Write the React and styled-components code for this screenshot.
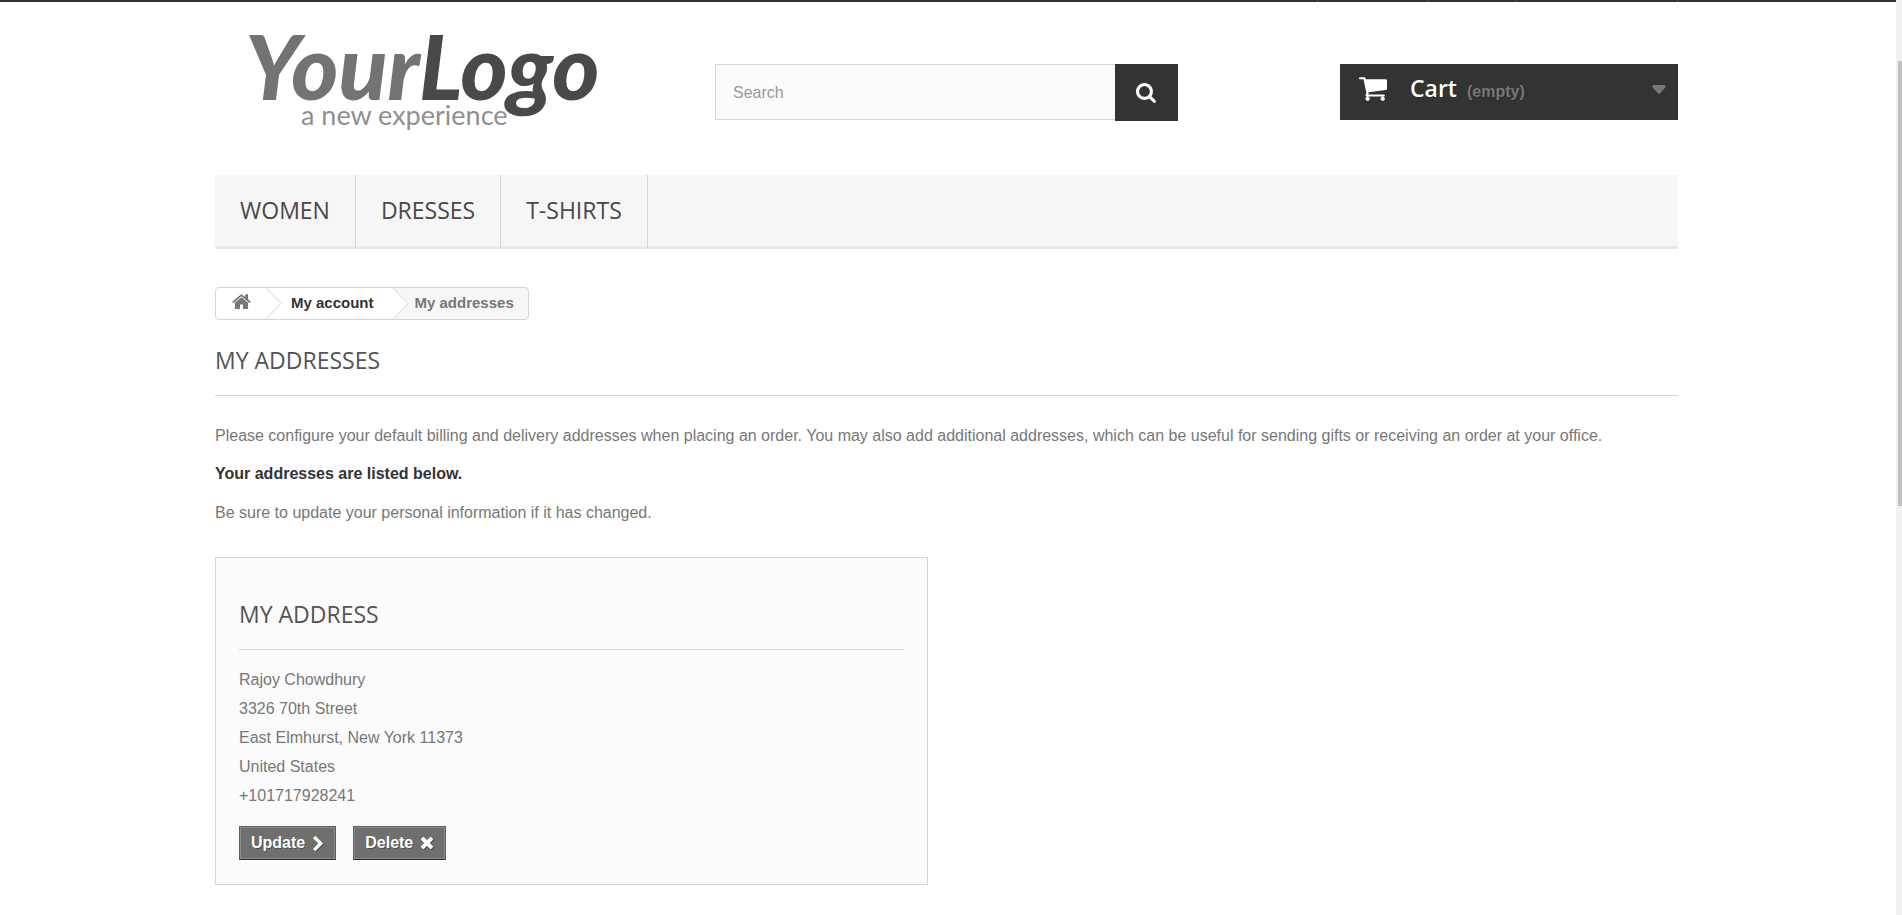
import React from 'react';
import styled, { createGlobalStyle } from 'styled-components';

const GlobalStyle = createGlobalStyle`
  * { box-sizing: border-box; }
  body {
    margin: 0;
    background: #fff;
    color: #777;
    font: 16px/24px "Liberation Sans", Arial, sans-serif;
  }
  a { color: inherit; text-decoration: none; }
  button { font-family: inherit; cursor: pointer; }
`;

const headingFont = '"Open Sans", "Noto Sans", sans-serif';

const Page = styled.div`
  min-height: 100vh;
  padding-right: 9px;
`;

const Container = styled.div`
  max-width: 1463px;
  margin: 0 auto;
`;

const TopBar = styled.div`
  height: 2px;
  margin-right: -9px;
  padding-right: 9px;
  background: #333;
`;

const TopBarCells = styled(Container)`
  display: flex;
  justify-content: flex-end;
`;

const TopBarCell = styled.span`
  width: ${(p) => p.$width}px;
  height: 2px;
  border-left: 1px solid #515151;
  &:last-child { border-right: 1px solid #515151; }
`;

const Header = styled.header`
  display: grid;
  grid-template-columns: repeat(3, 1fr);
  gap: 37px;
  height: 173px;
`;

const LogoLink = styled.a`
  padding-top: 18px;
  svg { display: block; overflow: visible; }
`;

const ScriptText = styled.text`
  font: italic 900 90px Lato, sans-serif;
`;

const Tagline = styled.text`
  font: 400 27px Lato, sans-serif;
  fill: #8f8f8f;
`;

const SearchForm = styled.form`
  display: flex;
  align-items: flex-start;
  padding-top: 62px;
`;

const SearchInput = styled.input`
  flex: 1;
  min-width: 0;
  height: 56px;
  padding: 1px 17px 0;
  border: 1px solid #d6d4d4;
  border-right: 0;
  border-radius: 0;
  background: #fbfbfb;
  color: #686666;
  font: 16px "Liberation Sans", Arial, sans-serif;
  outline: none;
  &::placeholder { color: #999; opacity: 1; }
`;

const SearchButton = styled.button`
  display: flex;
  align-items: center;
  justify-content: center;
  width: 63px;
  height: 57px;
  padding: 0 1px 0 0;
  border: 0;
  background: #333;
  color: #fff;
`;

const CartArea = styled.div`
  display: flex;
  justify-content: flex-end;
  align-items: flex-start;
  padding-top: 62px;
`;

const CartLink = styled.a`
  display: flex;
  align-items: center;
  width: 338px;
  height: 56px;
  padding: 0 12px 6px 19px;
  background: #333;
  color: #fff;
  text-shadow: 1px 1px rgba(0, 0, 0, 0.2);
`;

const CartText = styled.span`
  display: flex;
  align-items: baseline;
  gap: 10px;
  margin-left: 23px;
  color: #777;
  font-weight: 700;
`;

const CartLabel = styled.b`
  color: #fff;
  font: 600 23px/28px ${headingFont};
`;

const Caret = styled.svg`
  margin-left: auto;
  color: #777;
`;

const Nav = styled.nav`
  display: flex;
  height: 74px;
  background: linear-gradient(#f6f6f6 71px, #e9e9e9 71px);
`;

const NavLink = styled.a`
  padding: 0 25px;
  border-right: 1px solid #d6d4d4;
  color: #484848;
  font: 500 23px/70px ${headingFont};
  text-transform: uppercase;
`;

const Breadcrumb = styled.nav`
  display: flex;
  width: max-content;
  height: 33px;
  margin-top: 38px;
  overflow: hidden;
  border: 1px solid #d6d4d4;
  border-radius: 4px;
  background: #f6f6f6;
  color: #777;
  font-size: 15px;
  font-weight: 700;
  line-height: 29px;
`;

const HomeCrumb = styled.a`
  display: flex;
  align-items: center;
  width: 50px;
  padding: 0 0 4px 16px;
  background: #fff;
`;

const Crumb = styled.a`
  padding: 0 19px 0 9px;
  background: #fff;
  color: #333;
`;

const CurrentCrumb = styled.span`
  padding: 0 14px 0 6px;
`;

const CrumbArrow = styled.svg`
  flex: none;
  background: ${(p) => (p.$onWhite ? '#fff' : '#f6f6f6')};
`;

const Title = styled.h1`
  margin: ${(p) => (p.$boxed ? '0 0 15px' : '0 0 28px')};
  padding-bottom: 20px;
  border-bottom: 1px solid #d6d4d4;
  color: #555454;
  font: 500 23px/30px ${headingFont};
  text-transform: uppercase;
`;

const Main = styled.main`
  padding-top: 25px;
`;

const Paragraph = styled.p`
  margin: 0 0 14px;
  line-height: 24px;
`;

const Strong = styled(Paragraph)`
  margin-bottom: 15px;
  color: #333;
  font-weight: 700;
`;

const AddressGrid = styled.section`
  display: grid;
  grid-template-columns: repeat(2, 1fr);
  gap: 37px;
  margin-top: 32px;
`;

const AddressCard = styled.article`
  padding: 41px 23px 24px;
  border: 1px solid #d6d4d4;
  background: #fbfbfb;
`;

const AddressLines = styled.ul`
  margin: 0 0 16px;
  padding: 0;
  list-style: none;
  line-height: 29px;
`;

const Actions = styled.div`
  display: flex;
  gap: 17px;
`;

const ActionButton = styled.a`
  display: flex;
  align-items: center;
  gap: 8px;
  height: 34px;
  padding: 0 12px 0 11px;
  border: 1px solid #5f5f5f;
  border-bottom-color: #2b2b2b;
  box-shadow: inset 0 0 0 1px #8b8a8a;
  background: #6f6f6f;
  color: #fff;
  font-weight: 700;
  text-shadow: 1px 1px rgba(0, 0, 0, 0.3);
  svg { filter: drop-shadow(1px 1px 0 rgba(0, 0, 0, 0.25)); }
`;

const ScrollRail = styled.div`
  position: fixed;
  top: 0;
  right: 0;
  width: 6px;
  height: 100vh;
  padding: 61px 0 0 2px;
  background: #f1f1f1;
`;

const ScrollThumb = styled.div`
  height: 445px;
  background: #c1c1c1;
`;

const icons = {
  search: {
    box: '64 128 1664 1664',
    d: 'M1216 832q0-185-131.5-316.5t-316.5-131.5-316.5 131.5-131.5 316.5 131.5 316.5 316.5 131.5 316.5-131.5 131.5-316.5zm512 832q0 52-38 90t-90 38q-54 0-90-38l-343-342q-179 124-399 124-143 0-273.5-55.5t-225-150-150-225-55.5-273.5 55.5-273.5 150-225 225-150 273.5-55.5 273.5 55.5 225 150 150 225 55.5 273.5q0 220-124 399l343 343q37 37 37 90z',
  },
  home: {
    box: '72 224 1648 1312',
    d: 'M1472 992v480q0 26-19 45t-45 19h-384v-384h-256v384h-384q-26 0-45-19t-19-45v-480q0-1 .5-3t.5-3l575-474 575 474q1 2 1 6zm223-69l-62 74q-8 9-21 11h-3q-13 0-21-7l-692-577-692 577q-12 8-24 7-13-2-21-11l-62-74q-8-10-7-23.5t11-21.5l719-599q32-26 76-26t76 26l244 204v-195q0-14 9-23t23-9h192q14 0 23 9t9 23v408l219 182q10 8 11 21.5t-7 23.5z',
  },
  cart: {
    box: '64 256 1664 1408',
    d: 'M704 1536q0 52-38 90t-90 38-90-38-38-90 38-90 90-38 90 38 38 90zm896 0q0 52-38 90t-90 38-90-38-38-90 38-90 90-38 90 38 38 90zm128-1088v512q0 24-16.5 42.5t-40.5 21.5l-1044 122q13 60 13 70 0 16-24 64h920q26 0 45 19t19 45-19 45-45 19h-1024q-26 0-45-19t-19-45q0-11 8-31.5t16-36 21.5-40 15.5-29.5l-177-823h-204q-26 0-45-19t-19-45 19-45 45-19h256q16 0 28.5 6.5t19.5 15.5 13 24.5 8 26 5.5 29.5 4.5 26h1201q26 0 45 19t19 45z',
  },
  chevron: {
    box: '346 26 1036 1612',
    d: 'M1363 877l-742 742q-19 19-45 19t-45-19l-166-166q-19-19-19-45t19-45l531-531-531-531q-19-19-19-45t19-45l166-166q19-19 45-19t45 19l742 742q19 19 19 45t-19 45z',
  },
  remove: {
    box: '302 366 1188 1188',
    d: 'M1490 1322q0 40-28 68l-136 136q-28 28-68 28t-68-28l-294-294-294 294q-28 28-68 28t-68-28l-136-136q-28-28-28-68t28-68l294-294-294-294q-28-28-28-68t28-68l136-136q28-28 68-28t68 28l294 294 294-294q28-28 68-28t68 28l136 136q28 28 28 68t-28 68l-294 294 294 294q28 28 28 68z',
  },
};

function Icon({ name, width, height }) {
  const { box, d } = icons[name];
  return (
    <svg width={width} height={height} viewBox={box} fill="currentColor" aria-hidden="true">
      <path d={d} />
    </svg>
  );
}

function Logo() {
  return (
    <svg width="400" height="120" viewBox="0 0 400 120" role="img" aria-label="YourLogo, a new experience">
      <ScriptText x="30" y="80">
        <tspan fill="#727473">Your</tspan>
        <tspan fill="#494949">Logo</tspan>
      </ScriptText>
      <Tagline x="86" y="105">a new experience</Tagline>
    </svg>
  );
}

function Arrow({ onWhite }) {
  return (
    <CrumbArrow $onWhite={onWhite} width="16" height="31" viewBox="0 0 16 31" aria-hidden="true">
      <path d="M0 0 L15 15.5 L0 31" fill="#fff" stroke="#d6d4d4" />
    </CrumbArrow>
  );
}

const addressLines = [
  'Rajoy Chowdhury',
  '3326 70th Street',
  'East Elmhurst, New York 11373',
  'United States',
  '+101717928241',
];

export default function App() {
  return (
    <Page>
      <GlobalStyle />
      <TopBar>
        <TopBarCells>
          <TopBarCell $width={110} />
          <TopBarCell $width={89} />
          <TopBarCell $width={162} />
        </TopBarCells>
      </TopBar>
      <Container>
        <Header>
          <LogoLink href="#home"><Logo /></LogoLink>
          <SearchForm role="search" onSubmit={(e) => e.preventDefault()}>
            <SearchInput type="text" placeholder="Search" aria-label="Search" />
            <SearchButton type="submit" aria-label="Submit search">
              <Icon name="search" width={20} height={20} />
            </SearchButton>
          </SearchForm>
          <CartArea>
            <CartLink href="#cart">
              <Icon name="cart" width={28} height={24} />
              <CartText>
                <CartLabel>Cart</CartLabel>
                <span>(empty)</span>
              </CartText>
              <Caret width="14" height="9" viewBox="0 0 14 9" aria-hidden="true">
                <path d="M1.5 0h11q2 1 .8 2.4L8 8.4q-1 .9-2 0L.7 2.4Q-.5 1 1.500 0z" fill="currentColor" />
              </Caret>
            </CartLink>
          </CartArea>
        </Header>
        <Nav aria-label="Categories">
          <NavLink href="#women">Women</NavLink>
          <NavLink href="#dresses">Dresses</NavLink>
          <NavLink href="#t-shirts">T-shirts</NavLink>
        </Nav>
        <Breadcrumb aria-label="Breadcrumb">
          <HomeCrumb href="#home" aria-label="Home"><Icon name="home" width={19} height={15} /></HomeCrumb>
          <Arrow onWhite />
          <Crumb href="#account">My account</Crumb>
          <Arrow />
          <CurrentCrumb>My addresses</CurrentCrumb>
        </Breadcrumb>
        <Main>
          <Title>My addresses</Title>
          <Paragraph>
            Please configure your default billing and delivery addresses when placing an order. You may also add
            additional addresses, which can be useful for sending gifts or receiving an order at your office.
          </Paragraph>
          <Strong>Your addresses are listed below.</Strong>
          <Paragraph>Be sure to update your personal information if it has changed.</Paragraph>
          <AddressGrid>
            <AddressCard>
              <Title as="h2" $boxed>My address</Title>
              <AddressLines>
                {addressLines.map((line) => <li key={line}>{line}</li>)}
              </AddressLines>
              <Actions>
                <ActionButton href="#update">Update <Icon name="chevron" width={10} height={15} /></ActionButton>
                <ActionButton href="#delete">Delete <Icon name="remove" width={12} height={12} /></ActionButton>
              </Actions>
            </AddressCard>
          </AddressGrid>
        </Main>
      </Container>
      <ScrollRail aria-hidden="true"><ScrollThumb /></ScrollRail>
    </Page>
  );
}
